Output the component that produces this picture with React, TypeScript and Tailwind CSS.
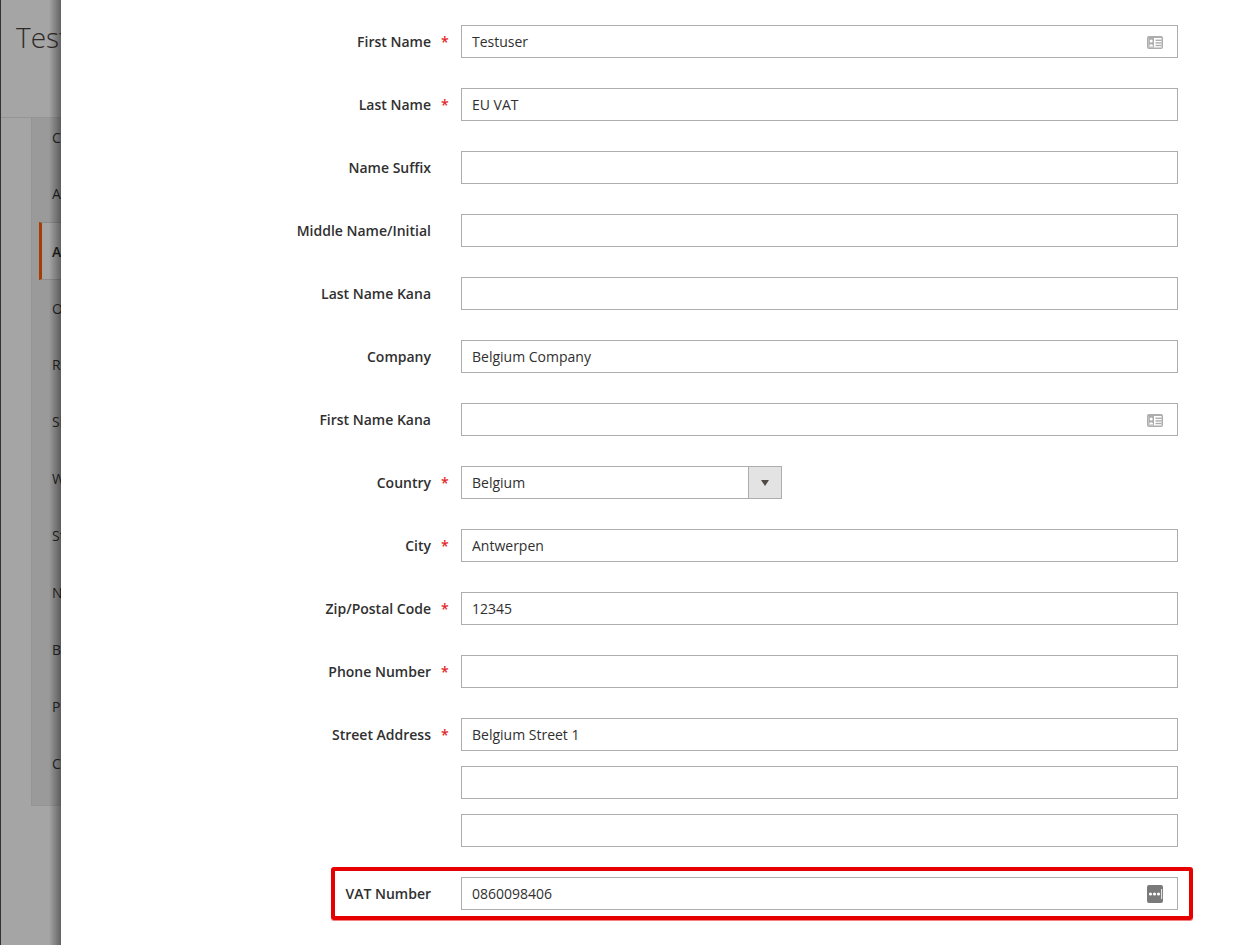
const navItems = [
  "Customer View",
  "Account Information",
  "Addresses",
  "Orders",
  "Returns",
  "Shopping cart",
  "Wishlist",
  "Store Credit",
  "Newsletter",
  "Billing Agreements",
  "Product Reviews",
  "Cart",
];

function CardIcon() {
  return (
    <svg width="16" height="13" viewBox="0 0 16 13" className="absolute right-[15px] top-[11px]">
      <rect width="16" height="13" rx="2" fill="#adadad" />
      <rect x="1.5" y="2" width="13" height="9.5" fill="#ffffff" />
      <rect x="1.5" y="2" width="5.5" height="9.5" fill="#adadad" />
      <circle cx="4.2" cy="5" r="1.5" fill="#ffffff" />
      <path d="M2.2 10.5 C2.2 7.6 6.2 7.6 6.2 10.5 Z" fill="#ffffff" />
      <rect x="8.5" y="3.6" width="6" height="1.4" fill="#adadad" />
      <rect x="8.5" y="6.2" width="6" height="1.4" fill="#adadad" />
      <rect x="8.5" y="8.8" width="6" height="1.4" fill="#adadad" />
    </svg>
  );
}

function DotsIcon() {
  return (
    <svg width="16" height="18" viewBox="0 0 16 18" className="absolute right-[15px] top-[8px]">
      <rect width="16" height="18" rx="2" fill="#7a7a7a" />
      <circle cx="3.5" cy="9" r="1.6" fill="#ffffff" />
      <circle cx="7.5" cy="9" r="1.6" fill="#ffffff" />
      <circle cx="11.5" cy="9" r="1.6" fill="#ffffff" />
      <rect x="14.2" y="4" width="0.9" height="10" fill="#ffffff" />
    </svg>
  );
}

function TextInput({ value = "", icon }: { value?: string; icon?: "card" | "dots" }) {
  return (
    <div className="relative h-[33px] w-[717px]">
      <input
        readOnly
        value={value}
        className="h-full w-full border border-[#adadad] bg-white px-[10px] text-[14px] text-[#303030] outline-none"
      />
      {icon === "card" ? <CardIcon /> : null}
      {icon === "dots" ? <DotsIcon /> : null}
    </div>
  );
}

function SelectInput({ value }: { value: string }) {
  return (
    <div className="flex h-[33px] w-[321px] border border-[#adadad] bg-white text-[14px] text-[#303030]">
      <div className="flex flex-1 items-center px-[10px]">{value}</div>
      <div className="flex w-[33px] items-center justify-center border-l border-[#adadad] bg-[#e3e3e3]">
        <svg width="8" height="6" viewBox="0 0 8 6">
          <path d="M0 0 H8 L4 6 Z" fill="#514943" />
        </svg>
      </div>
    </div>
  );
}

function Row({ label, required, children }: { label: string; required?: boolean; children: React.ReactNode }) {
  return (
    <div className="flex items-start">
      <label className="flex h-[33px] w-[370px] items-center justify-end text-[14px] font-semibold text-[#303030]">
        {label}
      </label>
      <div className="flex h-[33px] w-[30px] items-center pl-[10px] text-[14px] font-semibold text-[#e22626]">
        {required ? "*" : ""}
      </div>
      {children}
    </div>
  );
}

function navClass(i: number) {
  if (i === 0) return "flex h-[47px] items-center whitespace-nowrap pb-[9px] pl-[20px] text-[14px] text-[#262626]";
  if (i === 2)
    return "ml-[7px] flex h-[58px] items-center whitespace-nowrap border-y border-[#8c8c8c] border-l-[3px] border-l-[#a33d00] bg-[#a5a5a5] pl-[10px] text-[14px] font-semibold text-[#1f1f1f]";
  if (i === 3) return "flex h-[56px] items-center whitespace-nowrap pl-[20px] text-[14px] text-[#262626]";
  return "flex h-[57px] items-center whitespace-nowrap pl-[20px] text-[14px] text-[#262626]";
}

export default function App() {
  return (
    <div className="flex h-[945px] w-[1252px] overflow-hidden bg-white font-['Open_Sans',sans-serif]">
      {/* page behind the slide-in panel */}
      <div className="relative flex w-[61px] shrink-0 flex-col overflow-hidden border-l border-[#333333] bg-[#a5a5a5]">
        <div className="flex h-[118px] shrink-0 items-start border-b border-[#949494] pl-[15px] pt-[15px]">
          <span className="whitespace-nowrap text-[28px] font-light leading-[44px] text-[#2f2a28]">Testuser EU VAT</span>
        </div>
        <div className="ml-[30px] h-[688px] shrink-0 border-b border-l border-[#949494] bg-[#9a9a9a]">
          {navItems.map((item, i) => (
            <div key={item} className={navClass(i)}>
              {item}
            </div>
          ))}
        </div>
        <div className="absolute inset-y-0 right-0 w-[12px] bg-gradient-to-r from-transparent to-[#00000066]" />
      </div>

      {/* slide-in form */}
      <div className="flex flex-1 flex-col pt-[25px]">
        <div className="flex flex-col gap-[30px]">
          <Row label="First Name" required>
            <TextInput value="Testuser" icon="card" />
          </Row>
          <Row label="Last Name" required>
            <TextInput value="EU VAT" />
          </Row>
          <Row label="Name Suffix">
            <TextInput />
          </Row>
          <Row label="Middle Name/Initial">
            <TextInput />
          </Row>
          <Row label="Last Name Kana">
            <TextInput />
          </Row>
          <Row label="Company">
            <TextInput value="Belgium Company" />
          </Row>
          <Row label="First Name Kana">
            <TextInput icon="card" />
          </Row>
          <Row label="Country" required>
            <SelectInput value="Belgium" />
          </Row>
          <Row label="City" required>
            <TextInput value="Antwerpen" />
          </Row>
          <Row label="Zip/Postal Code" required>
            <TextInput value="12345" />
          </Row>
          <Row label="Phone Number" required>
            <TextInput />
          </Row>
          <Row label="Street Address" required>
            <div className="flex flex-col gap-[15px]">
              <TextInput value="Belgium Street 1" />
              <TextInput />
              <TextInput />
            </div>
          </Row>
        </div>
        <div className="ml-[270px] mt-[20px] flex h-[53px] w-[862px] items-start rounded-[3px] border-4 border-[#e60000] pt-[6px] shadow-[0_1px_0_#f28080]">
          <label className="flex h-[33px] w-[96px] items-center justify-end text-[14px] font-semibold text-[#303030]">
            VAT Number
          </label>
          <div className="w-[30px]" />
          <TextInput value="0860098406" icon="dots" />
        </div>
      </div>
    </div>
  );
}
